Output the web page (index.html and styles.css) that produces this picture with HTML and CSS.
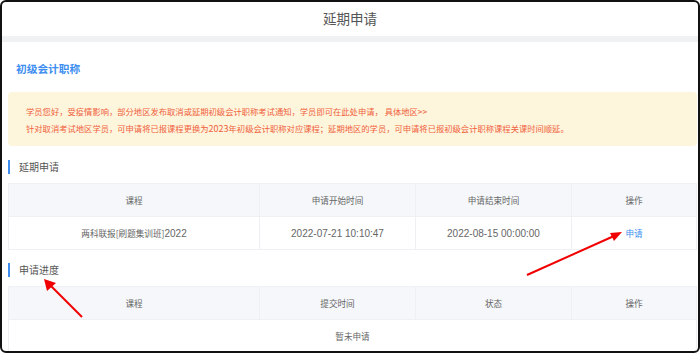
FILE: index.html
```html
<!DOCTYPE html>
<html lang="zh">
<head>
    <meta charset="UTF-8">
    <title>延期申请</title>
    <link rel="stylesheet" href="styles.css">
</head>
<body>
    <div class="frame">
        <div class="top">延期申请</div>
        <div class="band"></div>
        <div class="content">
            <div class="subject">初级会计职称</div>
            <div class="notice">
                <p>学员您好，受疫情影响，部分地区发布取消或延期初级会计职称考试通知，学员即可在此处申请， 具体地区&gt;&gt;</p>
                <p>针对取消考试地区学员，可申请将已报课程更换为<span class="num">2023</span>年初级会计职称对应课程；延期地区的学员，可申请将已报初级会计职称课程关课时间顺延。</p>
            </div>

            <div class="section-title">延期申请</div>
            <table class="grid">
                <tr>
                    <th class="c1">课程</th>
                    <th class="c2">申请开始时间</th>
                    <th class="c3">申请结束时间</th>
                    <th>操作</th>
                </tr>
                <tr>
                    <td>两科联报[刷题集训班]<span class="num">2022</span></td>
                    <td class="num">2022-07-21 10:10:47</td>
                    <td class="num">2022-08-15 00:00:00</td>
                    <td><a class="apply">申请</a></td>
                </tr>
            </table>

            <div class="section-title second">申请进度</div>
            <table class="grid">
                <tr>
                    <th class="c1">课程</th>
                    <th class="c2">提交时间</th>
                    <th class="c3">状态</th>
                    <th>操作</th>
                </tr>
                <tr>
                    <td colspan="4" class="empty">暂未申请</td>
                </tr>
            </table>
        </div>

        <svg class="marks" width="700" height="353" viewBox="0 0 700 353">
            <line x1="527" y1="275" x2="614" y2="236" stroke="#f00000" stroke-width="2"/>
            <polygon points="622,232 610,233 614,241" fill="#f00000"/>
            <line x1="82" y1="317" x2="50" y2="285" stroke="#f00000" stroke-width="2"/>
            <polygon points="44,279 47,291 56,283" fill="#f00000"/>
        </svg>
    </div>
</body>
</html>
```

FILE: styles.css
```css
html, body {
    margin: 0;
    height: 100%;
}
body {
    font-family: "Noto Sans CJK SC", "Liberation Sans", sans-serif;
    background: #fff;
}
.frame {
    position: relative;
    box-sizing: border-box;
    width: 700px;
    height: 353px;
    border: 2px solid #111;
    border-radius: 6px;
    overflow: hidden;
    background: #fff;
}
.top {
    height: 34px;
    line-height: 32px;
    text-align: center;
    font-size: 13.5px;
    color: #555;
}
.band {
    height: 6px;
    background: #f0f1f3;
}
.content {
    padding: 0 0 0 6px;
    width: 689px;
}
.subject {
    margin: 18px 0 0 8px;
    height: 18px;
    line-height: 18px;
    font-size: 10.7px;
    font-weight: bold;
    color: #3d8ef0;
}
.notice {
    margin-top: 14px;
    height: 54px;
    box-sizing: border-box;
    padding: 11px 0 0 18px;
    background: #fdf6dc;
    border-radius: 4px;
    color: #f0603c;
    font-size: 8.3px;
}
.notice p {
    margin: 0;
    height: 17px;
    line-height: 17px;
    white-space: nowrap;
}
.notice .num {
    font-size: 9px;
}
.section-title {
    margin-top: 14px;
    height: 14px;
    line-height: 14px;
    padding-left: 9px;
    border-left: 2px solid #3d8ef0;
    font-size: 10px;
    color: #555;
}
.section-title.second {
    margin-top: 13px;
}
.grid {
    margin-top: 9px;
    width: 689px;
    border-collapse: collapse;
    table-layout: fixed;
    font-size: 8.6px;
    color: #666;
}
.grid th, .grid td {
    height: 32px;
    padding: 0;
    text-align: center;
    font-weight: normal;
    border: 1px solid #eef0f4;
}
.grid th {
    background: #f5f7fa;
}
.grid .num {
    font-family: "Liberation Sans", sans-serif;
    font-size: 10px;
}
.c1 { width: 250px; }
.c2 { width: 155px; }
.c3 { width: 155px; }
.apply {
    color: #3d8ef0;
    cursor: pointer;
}
.empty {
    border-bottom: none;
}
.marks {
    position: absolute;
    left: -2px;
    top: -2px;
    pointer-events: none;
}
```
